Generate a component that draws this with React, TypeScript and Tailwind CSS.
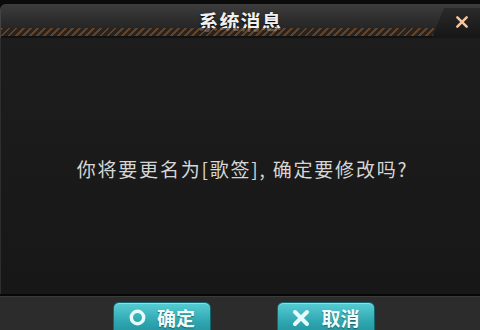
import React from "react";

const cjk = { fontFamily: '"Noto Sans CJK SC", "Noto Sans", sans-serif' };

function RingIcon() {
  return (
    <svg width="17" height="17" viewBox="0 0 17 17" className="shrink-0">
      <circle cx="8.5" cy="8.5" r="6.2" fill="none" stroke="#e6fbfc" strokeWidth="3.4" />
    </svg>
  );
}

function CrossIcon({ size = 18, color = "#e6fbfc", width = 4 }: { size?: number; color?: string; width?: number }) {
  return (
    <svg width={size} height={size} viewBox="0 0 18 18" className="shrink-0">
      <path d="M3 3 L15 15 M15 3 L3 15" stroke={color} strokeWidth={width} strokeLinecap="round" />
    </svg>
  );
}

function DialogButton({ icon, label }: { icon: React.ReactNode; label: string }) {
  return (
    <button
      className="w-[98px] h-[40px] rounded-[6px] border border-[#13666d] bg-gradient-to-b from-[#56cdd4] via-[#2ea6b0] to-[#1d8791] shadow-[inset_0_1px_0_rgba(255,255,255,0.35)] flex items-center justify-center gap-[11px] pb-[9px]"
    >
      {icon}
      <span style={cjk} className="text-[19px] font-bold leading-none text-[#f2fdfd] [text-shadow:0_1px_1px_rgba(0,60,64,0.6)]">
        {label}
      </span>
    </button>
  );
}

export default function App() {
  return (
    <div className="w-[480px] h-[330px] bg-[#0b0b0b] overflow-hidden flex flex-col pt-[4px]">
      {/* Header */}
      <div className="relative h-[34px] shrink-0 rounded-tl-[6px] bg-gradient-to-b from-[#3d3d3d] via-[#2c2c2c] to-[#1e1e1e] border-l border-[#444]">
        {/* hatched stripe */}
        <div className="absolute left-0 right-[46px] bottom-[2px] h-[8px] bg-[repeating-linear-gradient(135deg,#76502c_0_2px,#2a231d_2px_5px)] opacity-75" />
        <div className="absolute left-0 right-0 bottom-0 h-[2px] bg-[#121212]" />
        {/* close tab */}
        <div className="absolute right-0 top-[4px] bottom-0 w-[48px] bg-gradient-to-b from-[#2a2a2a] to-[#161616] [clip-path:polygon(12px_0,100%_0,100%_100%,0_100%)]" />
        <div className="absolute right-[11px] top-[11px]">
          <CrossIcon size={14} color="#f6c79c" width={3.2} />
        </div>
        <div className="h-full flex items-center justify-center pt-[1px]">
          <span style={cjk} className="text-[20px] font-bold leading-none text-[#f0f0f0] tracking-[1px] [text-shadow:0_1px_2px_#000]">
            系统消息
          </span>
        </div>
      </div>

      {/* Body */}
      <div className="flex-1 bg-gradient-to-b from-[#1d1d1d] to-[#171717] border-l border-[#2e2e2e] flex items-center justify-center pt-[4px]">
        <p style={cjk} className="text-[19px] leading-none text-[#d6d6d6] tracking-[1.8px] pl-[4px]">
          你将要更名为[歌签], 确定要修改吗?
        </p>
      </div>

      {/* Footer */}
      <div className="h-[36px] shrink-0 border-t-2 border-[#080808] bg-[#2c2c2c] shadow-[inset_0_1px_0_#3a3a3a] flex justify-center items-start gap-[66px] pl-[8px] pt-[6px]">
        <DialogButton icon={<RingIcon />} label="确定" />
        <DialogButton icon={<CrossIcon />} label="取消" />
      </div>
    </div>
  );
}
